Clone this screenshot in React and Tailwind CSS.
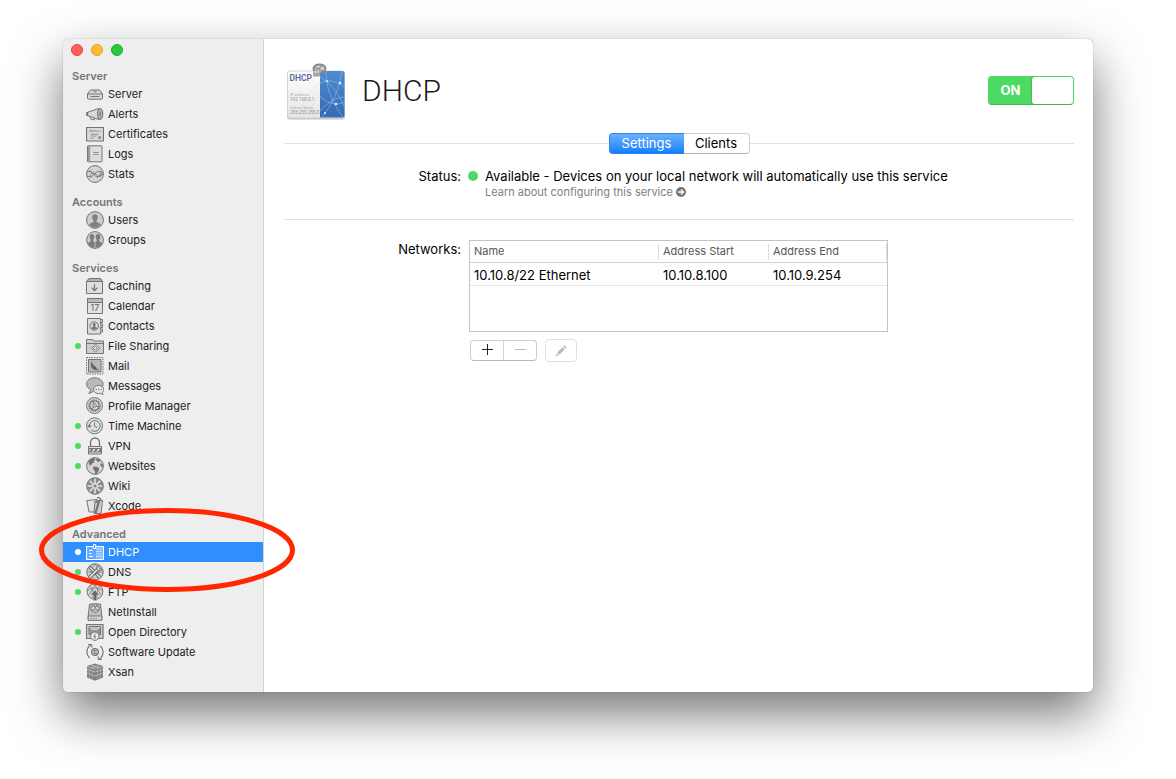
import React, { useState } from "react";

const glyphs = {
  server: (
    <>
      <path d="M1.5 9 4.5 5h9l3 4v4.2a1 1 0 0 1-1 1h-13a1 1 0 0 1-1-1z" fill="#dadada" />
      <path d="M1.5 9h15M4.5 11.5h9M7.5 6.8h3" />
    </>
  ),
  alerts: (
    <>
      <path d="M1 7.5 13 3.5v11L1 10.5z" fill="#d8d8d8" />
      <ellipse cx="14.2" cy="9" rx="2.6" ry="5.6" fill="#b0b0b0" />
      <path d="M14.2 6.8v4.4M4 11.8l1 2.7 3.5.3-.5-2" />
      <path d="M1.2 7.2v3.6" strokeWidth="2" />
    </>
  ),
  certificates: (
    <>
      <path d="M.5 2.500h17v13.500H.5z" fill="#dadada" strokeWidth="1.200" />
      <path d="M3.500 7.200 5 4.800l.8 2.200 1.500-1.500.8 1.300L9.500 5l.7 1.600 1.400-.8 1 .7 2-.6M4.500 9.300h8M4.500 11.300l2-.5 2 .5 2-.5M4.500 13.300h3" strokeWidth=".9" stroke="#8a8a8a" />
      <circle cx="13.600" cy="12.400" r="1.500" fill="#8a8a8a" stroke="none" />
    </>
  ),
  logs: (
    <>
      <rect x="1.500" y=".8" width="14.500" height="16" rx=".8" fill="#dedede" />
      <path d="M2 1.200h2.200v15.400H2z" fill="#9b9b9b" stroke="none" />
      <path d="M7 7.500h6M7 9.500h6" strokeWidth=".9" stroke="#8f8f8f" />
    </>
  ),
  stats: (
    <>
      <circle cx="9" cy="9" r="8.400" fill="#d4d4d4" />
      <path d="M1 7.400c3-2.400 5-.5 7 2.100s4.200 3.200 8.800-.5M1.200 10.800c2.800 2 5 .6 7-1.500s4.500-4.300 8.200-1.800" />
      <path d="M5 12.500c-1.500-2.500.500-5.500 3-4.500s3 4 5.500 3.500 2.500-3 1-4.500M4 5.500l3 3M11 13l4-5" strokeWidth=".8" />
    </>
  ),
  users: (
    <>
      <circle cx="9" cy="9" r="8.400" fill="#cdcdcd" />
      <path d="M9 3.200c-2 0-3 1.500-2.800 3.300.1 1.300.6 2.100 1.200 2.900v1.500c-1.600.9-3.400 1.100-4.300 2.600A7.800 7.800 0 0 0 9 16.600a7.800 7.800 0 0 0 5.900-3.100c-.9-1.500-2.700-1.700-4.300-2.600V9.400c.6-.8 1.100-1.600 1.200-2.900.2-1.800-.8-3.300-2.800-3.300z" fill="#808080" stroke="none" />
    </>
  ),
  groups: (
    <>
      <circle cx="9" cy="9" r="8.400" fill="#cdcdcd" />
      <path d="M5.900 3c-1.700 0-2.500 1.400-2.300 2.900.1 1.200.500 2 1 2.700v1.600c-1 .7-2.200 1-2.800 2.100A8 8 0 0 0 8.600 16.800v-5.600L7.300 10V8.600c.5-.7.9-1.500 1-2.700C8.500 4.400 7.600 3 5.900 3zM12.100 3c1.700 0 2.500 1.400 2.300 2.900-.1 1.200-.5 2-1 2.700v1.600c1 .7 2.200 1 2.800 2.100a8 8 0 0 1-6.800 4.500v-5.600l1.300-1.200V8.600c-.5-.7-.9-1.500-1-2.700-.2-1.500.700-2.900 2.400-2.900z" fill="#7c7c7c" stroke="none" />
    </>
  ),
  caching: (
    <>
      <path d="M.5 4.500 3 1.500h11.400l2.100 3v12H.5z" fill="#dedede" />
      <path d="M.8 4.500 3.200 1.500h11l2.100 3z" fill="#b0b0b0" />
      <path d="M8.500 7v6.500M5.500 10.600l3 3 3-3" strokeWidth="1.200" />
    </>
  ),
  calendar: (
    <>
      <path d="M1.500 1.500h15v15h-15z" fill="#e2e2e2" />
      <path d="M1.500 1.500h15v4h-15z" fill="#b9b9b9" />
      <text x="9" y="14.300" textAnchor="middle" fontSize="9" fill="#666" stroke="none" fontFamily="Inter, sans-serif">17</text>
    </>
  ),
  contacts: (
    <>
      <path d="M1.500 1.500h13v15.500h-13z" fill="#dcdcdc" />
      <path d="M14.500 2.500h2v3h-2m0 1.500h2v3.500h-2m0 1.500h2v3h-2" fill="#c6c6c6" />
      <circle cx="8.200" cy="9" r="4.200" />
      <path d="M8.200 6a1.600 1.600 0 0 0-.9 2.900l-.1.800-2.200 1.300a4 4 0 0 0 6.400 0l-2.200-1.300-.1-.8A1.600 1.600 0 0 0 8.200 6z" fill="#777" stroke="none" />
    </>
  ),
  files: (
    <>
      <path d="M.5 2.500h6.300l1.200 1.500h9.500v12.500H.5z" fill="#cecece" />
      <path d="M.5 6.500h17" />
      <path d="m9.500 7.200 4 4-4 4-4-4z" fill="#eee" />
      <path d="m9.500 9.300 1.900 1.900-1.900 1.900-1.900-1.900z" />
    </>
  ),
  mail: (
    <>
      <path d="M.5.500h16.500v16.500H.5z" strokeDasharray="1.500 1" fill="#e8e8e8" />
      <path d="M2.500 2.500h12.500v12.500H2.500z" fill="#b8b8b8" />
      <path d="M5 4.500v4.500l1.200 2.500 2.600 1.500 4.700.5-3.300-2.300-.2-1.500-1.800-.4L6.500 6.500z" fill="#606060" stroke="none" />
    </>
  ),
  messages: (
    <>
      <path d="M8.500.800C4 .800.600 3.500.600 7c0 2.600 1.800 4.600 4 5.500-.2 1.800-.9 2.800-2 3.800 2.400 0 4.200-1.300 5.200-3 5 .200 9.200-2.300 9.200-6.100 0-3.700-3.800-6.400-8.500-6.400z" fill="#b9b9b9" />
      <path d="M12.600 8.500c-3 0-5.200 1.700-5.200 4s2.200 4 5.200 4l1.800-.2c.8.700 1.700 1 2.800 1-.6-.6-1-1.200-1-2 1-.7 1.600-1.700 1.600-2.800 0-2.300-2.200-4-5.200-4z" fill="#e8e8e8" />
      <path d="M9.700 12.500h1m1.400 0h1m1.400 0h1" strokeWidth="1.300" />
    </>
  ),
  profile: (
    <>
      <circle cx="8.500" cy="8.500" r="8" fill="#d6d6d6" />
      <circle cx="8.500" cy="8.500" r="4.700" strokeWidth="1.200" />
      <circle cx="8.500" cy="8.500" r="5.700" strokeWidth="1.200" strokeDasharray="1.200 1.100" />
      <circle cx="8.500" cy="8.500" r="1.700" />
      <path d="M7.500 4.200v3M10 9l3 1M7.500 10l-2 2.500" />
    </>
  ),
  time: (
    <>
      <circle cx="8.500" cy="8.800" r="8" fill="#dfdfdf" />
      <path d="M3.300 9.500a5.400 5.400 0 1 1 1.800 3.500" />
      <path d="m1.700 8.300 1.700 2 2-1.700" fill="#777" />
      <path d="M8.500 5.500v3.600l2.600 1.500" />
    </>
  ),
  vpn: (
    <>
      <path d="M4.500 9V5.500a4.400 4.400 0 0 1 9 0V9" strokeWidth="1.300" />
      <path d="M2.500 9.500h13v7.500h-13z" fill="#e4e4e4" />
      <path d="M2.500 11.500h13M2.500 15h13" />
      <path d="m3 14.800 2-3h2.500l-2 3zm4.500 0 2-3H12l-2 3zm4.500 0 2-3h1.200l-.1 3z" fill="#777" stroke="none" />
    </>
  ),
  websites: (
    <>
      <circle cx="9" cy="9" r="8.400" fill="#d4d4d4" />
      <path d="M2.200 4.500c1.600-2.200 3.700-3.300 6.300-3.500L9.200 2.500 7.800 4l.6 1.400-2 .6-.6 1.800-2-.4L5 9.200l-1.400-.4zM9.200 2l3.500-.1 1.900 1.900-1.900 1.300L11 4zM7.500 9.500l3.600.3 2.100 2-.6 2.500-2.200 2.700L9.200 17l-.4-3L7 11.800zM14 6.500l2.700.5.2 3-1.700-.3z" fill="#727272" stroke="none" />
    </>
  ),
  wiki: (
    <>
      <circle cx="9" cy="9" r="8.300" fill="#8c8c8c" />
      <path d="M9 9V1.500M9 9l5.300-5.300M9 9h7.500M9 9l5.300 5.300M9 9v7.500M9 9l-5.300 5.300M9 9H1.500M9 9 3.700 3.700" stroke="#e4e4e4" strokeWidth="1.600" />
      <circle cx="9" cy="9" r="2" fill="#808080" stroke="#dedede" />
    </>
  ),
  xcode: (
    <>
      <path d="M.8 3.500 11 2.500l1 12.500H3z" fill="#e4e4e4" />
      <path d="m9 4 7.500-.5-1.500 13H8z" fill="#d2d2d2" />
      <path d="m12.800 3-2 .8-1.500 1.600 1.500.6.700-.8L8.200 17h2.200l3.400-11 .5-3z" fill="#777" stroke="none" />
      <path d="M11 .800c2-.5 3.700.5 4 2.600" strokeWidth="1.400" />
    </>
  ),
  dns: (
    <>
      <circle cx="9" cy="9" r="8.200" fill="#cfcfcf" />
      <path d="M1 9h16M9 1c-5 5-5 11 0 16M9 1c5 5 5 11 0 16" strokeWidth=".6" />
      <path d="M3.500 4 14 14.500" stroke="#666" strokeWidth="3.200" />
      <path d="m4 4.500 4 4M10.500 11l3.500 3.500" stroke="#ececec" strokeWidth="1.400" />
      <path d="M3 15 12 6" stroke="#666" strokeWidth="3.600" />
      <path d="M3.500 14.500 12 6" stroke="#ececec" strokeWidth="1.600" />
      <path d="M12 2.500c-1.500 1.500-1.500 3.500-.3 4.500s3 .8 4.300-.7l-2.200-.3-.6-1.500z" fill="#ececec" stroke="#666" />
    </>
  ),
  ftp: (
    <>
      <circle cx="9" cy="8.500" r="7.900" fill="#d4d4d4" />
      <path d="M1.500 8c3-4 12-4 15 0M4 3c3 3 4 8 2 12M14 3c-3 3-4 8-2 12M3 12l6-10 6 10" strokeWidth=".7" />
      <path d="M9 7 4.300 12h2.900v5.700h3.600V12h2.900z" fill="#686868" stroke="#eee" strokeWidth=".5" />
    </>
  ),
  netinstall: (
    <>
      <path d="M3.500 1h11l1.300 12v4.200H2.200V13z" fill="#c0c0c0" />
      <path d="M2.200 13h13.600v4.200H2.200z" fill="#e0e0e0" />
      <path d="M4.500 15.200h8" strokeDasharray="1.500 1" />
      <circle cx="9" cy="5.200" r="4.200" fill="#dcdcdc" />
      <path d="M5.500 4c2-1 5-1 7 0M5.500 6.500c2 1 5 1 7 0M7.500 1.700c1 2.200 2.500 4.500 4.500 6M11 1.700c-1 2.500-2.500 4.500-4.500 6" strokeWidth=".8" />
    </>
  ),
  directory: (
    <>
      <path d="M.5 1.500h16.500v14H.5z" fill="#cfcfcf" strokeWidth="1.200" />
      <path d="M3 3.500h11.500v8H3z" fill="#989898" />
      <path d="M3.500 4c2 3.500 8.500 3.500 10.500 0" stroke="#d5d5d5" fill="#bdbdbd" />
      <circle cx="8.800" cy="13.200" r="4.200" fill="#ececec" />
      <path d="M9.500 10.700 7.700 13.500h1.800l-.8 2.500" />
    </>
  ),
  update: (
    <>
      <path d="M5 1.800A8.300 8.300 0 0 0 3.600 15M13 16.200A8.300 8.300 0 0 0 14.400 3" strokeWidth="1.200" />
      <path d="M2.200 1.500h3.600v3.300M15.800 16.500h-3.600v-3.300" />
      <circle cx="9" cy="9" r="3.700" fill="#c4c4c4" />
      <path d="M6 8c2-1 4-1 6 0M6 10c2 1 4 1 6 0M8 6c0 2 1 4 3 6" strokeWidth=".8" />
    </>
  ),
  xsan: (
    <>
      <path d="m9 .500 8 2.500v11.500L9 17.700 1 14.500V3z" fill="#808080" stroke="none" />
      <path d="m1 6.500 8 2.500 8-2.500M1 10.200 9 13l8-2.800M1 3.500l8 2.300 8-2.300M5 2.200l8 2.500M13 2.200 5 4.700" stroke="#cfcfcf" strokeWidth=".7" />
      <path d="M6.300 5v11.500M11.700 5v11.500M3.700 4.500v11M14.300 4.500v11" stroke="#bdbdbd" strokeWidth=".5" />
    </>
  ),
  dhcp: (
    <g stroke="#fff">
      <path d="M.5 3.500h17v13H.5z" fill="#5ea9ff" strokeWidth="1.200" />
      <path d="M10 4h7v12h-7z" fill="#7dbaff" stroke="none" />
      <path d="M10.500 6h6M10.500 8.500h6M10.500 11h6M10.500 13.500h6" strokeDasharray="1 1" />
      <path d="M3 7.500h3.500M3 10.500h2.500M3 13.500h4" strokeWidth="1" />
      <path d="M7.400 1.500h2.200v4H7.400z" fill="#2f8fff" />
    </g>
  ),
};

function Glyph({ name }) {
  return (
    <svg viewBox="0 0 18 18" className="size-[18px] shrink-0" fill="none" stroke="#747474" aria-hidden="true">
      {glyphs[name]}
    </svg>
  );
}

const sections = [
  {
    title: "Server",
    items: [
      ["Server", "server"],
      ["Alerts", "alerts"],
      ["Certificates", "certificates"],
      ["Logs", "logs"],
      ["Stats", "stats"],
    ],
  },
  {
    title: "Accounts",
    items: [
      ["Users", "users"],
      ["Groups", "groups"],
    ],
  },
  {
    title: "Services",
    items: [
      ["Caching", "caching"],
      ["Calendar", "calendar"],
      ["Contacts", "contacts"],
      ["File Sharing", "files", true],
      ["Mail", "mail"],
      ["Messages", "messages"],
      ["Profile Manager", "profile"],
      ["Time Machine", "time", true],
      ["VPN", "vpn", true],
      ["Websites", "websites", true],
      ["Wiki", "wiki"],
      ["Xcode", "xcode"],
    ],
  },
  {
    title: "Advanced",
    marked: true,
    items: [
      ["DHCP", "dhcp", true],
      ["DNS", "dns", true],
      ["FTP", "ftp", true],
      ["NetInstall", "netinstall"],
      ["Open Directory", "directory", true],
      ["Software Update", "update"],
      ["Xsan", "xsan"],
    ],
  },
];

function SidebarItem({ label, icon, running, selected }) {
  const dot = selected ? "bg-white" : running ? "bg-[#4cd964]" : "";
  return (
    <li>
      <a
        href="#"
        aria-current={selected ? "page" : undefined}
        className={`flex h-5 items-center pl-3 ${selected ? "bg-[#2f8fff] text-white" : "text-[#222222]"}`}
      >
        <span className={`mr-[5px] size-1.5 shrink-0 rounded-full ${dot}`} />
        <Glyph name={icon} />
        <span className="ml-1 whitespace-nowrap">{label}</span>
      </a>
    </li>
  );
}

function Sidebar() {
  return (
    <aside className="w-[201px] shrink-0 rounded-l-[5px] border-r border-[#d2d2d2] bg-[#eeeeee] pb-2.5">
      <div className="flex h-[29px] items-start gap-2 pt-[5px] pl-2">
        <button aria-label="Close" className="size-3 rounded-full border border-[#e2463f] bg-[#ff5f57]" />
        <button aria-label="Minimize" className="size-3 rounded-full border border-[#dfa023] bg-[#ffbd2e]" />
        <button aria-label="Zoom" className="size-3 rounded-full border border-[#1dad2b] bg-[#28c940]" />
      </div>
      <nav className="flex flex-col gap-2.5 text-[11px]">
        {sections.map((s) => (
          <section key={s.title} className="relative">
            <h2 className="pl-[9px] text-[11px] leading-4 font-semibold text-[#757575]">{s.title}</h2>
            <ul>
              {s.items.map(([label, icon, running]) => (
                <SidebarItem key={label} label={label} icon={icon} running={running} selected={label === "DHCP"} />
              ))}
            </ul>
            {s.marked && (
              <svg
                viewBox="0 0 256 86"
                className="pointer-events-none absolute -top-[19px] -left-6 h-[86px] w-[256px]"
                fill="none"
                aria-hidden="true"
              >
                <ellipse cx="128" cy="43" rx="125.500" ry="39.500" stroke="#ff2600" strokeWidth="5" />
              </svg>
            )}
          </section>
        ))}
      </nav>
    </aside>
  );
}

function DhcpBadge() {
  return (
    <svg viewBox="0 0 60 58" className="h-[58px] w-[60px]" aria-hidden="true">
      <defs>
        <linearGradient id="card" x1="0" y1="0" x2="0" y2="1">
          <stop offset="0" stopColor="#fdfdfd" />
          <stop offset="1" stopColor="#e6e6e6" />
        </linearGradient>
        <linearGradient id="blue" x1="0" y1="0" x2="0" y2="1">
          <stop offset="0" stopColor="#4f8bd0" />
          <stop offset="1" stopColor="#3569b5" />
        </linearGradient>
        <clipPath id="half">
          <path d="M34 8h22.500a2 2 0 0 1 2 2v42.500a2 2 0 0 1-2 2H34z" />
        </clipPath>
      </defs>
      <rect x="1" y="9" width="58" height="47.500" rx="3" fill="#9b9b9b" opacity=".6" />
      <rect x="1.500" y="8" width="57" height="47" rx="2.500" fill="url(#card)" stroke="#cfcfcf" strokeWidth=".8" />
      <g clipPath="url(#half)">
        <path d="M34 8h25v47H34z" fill="url(#blue)" />
        <g fill="none" stroke="#a9cdf2" strokeWidth=".8" opacity=".6">
          <path d="M34 33c8 8 16 10 25 6M34 20c10-4 18-2 25 5M34 48c8-9 17-14 25-14M40 8c0 17 6 32 17 46M56 8c-3 18-9 33-20 46M34 14c12 7 20 18 25 32" />
        </g>
        <g fill="#d8ecff">
          <circle cx="54" cy="20" r="1.300" />
          <circle cx="41" cy="18" r="1" />
          <circle cx="50" cy="41" r="1.300" />
          <circle cx="39" cy="50" r="1" />
        </g>
      </g>
      <path d="M18 54c2-12 8-22 16-27M24 54c0-10 4-18 10-23M12 55c5-16 12-26 22-36" stroke="#e2e2e2" strokeWidth=".7" fill="none" />
      <ellipse cx="33.500" cy="5.500" rx="6" ry="4" fill="#d5d5d5" stroke="#888" strokeWidth="2" />
      <path d="m28 4 9 4M29 8l7-5" stroke="#8f8f8f" strokeWidth="1.200" />
      <rect x="27" y="7.500" width="7" height="6" rx="1" fill="#a5a5a5" />
      <path d="M28 9h5" stroke="#eee" />
      <g fontFamily="Roboto, sans-serif">
        <text x="3.500" y="17.800" fontSize="8.500" fontWeight="600" fill="#5b6b92">DHCP</text>
        <text x="4" y="32.500" fontSize="4" fill="#b0b0b0">IP address</text>
        <text x="4" y="37.500" fontSize="4.600" fill="#909090">192.168.0.1</text>
        <text x="4" y="45.500" fontSize="4" fill="#b0b0b0">Subnet Mask</text>
        <text x="4" y="50.500" fontSize="4.600" fill="#909090">255.255.255.0</text>
      </g>
    </svg>
  );
}

function ServiceSwitch() {
  const [on, setOn] = useState(true);
  return (
    <button
      role="switch"
      aria-checked={on}
      aria-label="DHCP service"
      onClick={() => setOn(!on)}
      className={`flex h-[29px] w-[86px] items-stretch rounded-[4px] border ${on ? "border-[#4cd964] border-b-[#3fb553] bg-[#4cd964]" : "flex-row-reverse border-[#bbb] bg-[#bbb]"}`}
    >
      <span className="flex flex-1 items-center justify-center text-[13px] font-bold text-white">{on ? "ON" : "OFF"}</span>
      <span className="w-[41px] rounded-[3px] bg-white shadow-[-1px_0_1px_rgba(0,0,0,0.15)]" />
    </button>
  );
}

function Tabs() {
  const [tab, setTab] = useState("Settings");
  const active = "border-[#2f86f0] bg-linear-to-b from-[#69b1fa] to-[#0d7eff] text-white";
  const idle = "border-[#cfcfcf] border-b-[#b5b5b5] bg-white text-black";
  return (
    <div className="flex items-center">
      <span className="h-px flex-1 bg-[#e2e2e2]" />
      <div role="tablist" className="flex h-[21px] text-[13px] leading-[19px]">
        <button
          role="tab"
          aria-selected={tab === "Settings"}
          onClick={() => setTab("Settings")}
          className={`w-[75px] rounded-l-[4px] border border-r-0 ${tab === "Settings" ? active : idle}`}
        >
          Settings
        </button>
        <button
          role="tab"
          aria-selected={tab === "Clients"}
          onClick={() => setTab("Clients")}
          className={`w-[66px] rounded-r-[4px] border border-l-0 ${tab === "Clients" ? active : idle}`}
        >
          Clients
        </button>
      </div>
      <span className="h-px flex-1 bg-[#e2e2e2]" />
    </div>
  );
}

const networks = [{ name: "10.10.8/22 Ethernet", start: "10.10.8.100", end: "10.10.9.254" }];

function HeadCell({ children }) {
  return (
    <th scope="col" className="h-[22px] border-b border-[#d0d0d0] p-0 text-left text-[11px] leading-[14px] font-normal text-[#555]">
      <div className="border-r border-[#dcdcdc] pb-0.5 pl-1">{children}</div>
    </th>
  );
}

function Cell({ children }) {
  return <td className="h-[23px] border-b border-[#e6e6e6] pt-0.5 pr-0 pb-0 pl-1">{children}</td>;
}

function NetworksTable() {
  return (
    <div className="h-[92px] w-[419px] border border-[#c4c4c4] bg-white">
      <table aria-labelledby="networks-label" className="w-full table-fixed border-separate border-spacing-0">
        <colgroup>
          <col className="w-[189px]" />
          <col className="w-[110px]" />
          <col />
        </colgroup>
        <thead>
          <tr>
            <HeadCell>Name</HeadCell>
            <HeadCell>Address Start</HeadCell>
            <HeadCell>Address End</HeadCell>
          </tr>
        </thead>
        <tbody className="text-[13px] leading-4 text-black">
          {networks.map((n) => (
            <tr key={n.name}>
              <Cell>{n.name}</Cell>
              <Cell>{n.start}</Cell>
              <Cell>{n.end}</Cell>
            </tr>
          ))}
        </tbody>
      </table>
    </div>
  );
}

export default function App() {
  return (
    <div className="flex min-h-screen bg-white pt-[39px] pr-[83px] pb-[87px] pl-[63px] font-['Inter',sans-serif] text-black">
      <div className="flex flex-1 rounded-[5px] bg-white shadow-[0_0_1px_rgba(0,0,0,0.5),0_22px_50px_rgba(0,0,0,0.54)]">
        <div className="relative z-10 flex">
          <Sidebar />
        </div>
        <main className="flex min-w-0 flex-1 flex-col pt-6 pr-[19px] pl-5">
          <header className="flex items-start pl-0.5">
            <DhcpBadge />
            <h1 className="ml-4 flex-1 pt-2 font-['Roboto',sans-serif] text-[30px] leading-[40px] font-light text-[#1a1a1a]">DHCP</h1>
            <div className="pt-[13px]">
              <ServiceSwitch />
            </div>
          </header>

          <div className="mt-3">
            <Tabs />
          </div>

          <div className="mt-3.5 grid grid-cols-[177px_1fr] gap-x-[7px] border-b border-[#e2e2e2] pb-[19px] text-[13px] leading-4">
            <span className="text-right">Status:</span>
            <div className="flex items-start">
              <span className="mt-[3px] mr-[7px] size-2.5 shrink-0 rounded-full bg-[#4cd964]" />
              <div>
                <p>Available - Devices on your local network will automatically use this service</p>
                <a href="#" className="flex items-center gap-[3px] text-[11px] leading-4 text-[#808080]">
                  Learn about configuring this service
                  <svg viewBox="0 0 10 10" className="size-2.5" aria-hidden="true">
                    <circle cx="5" cy="5" r="5" fill="#747474" />
                    <path d="M2 5h5M5 2.500 7.500 5 5 7.500" stroke="#fff" strokeWidth="1.400" fill="none" />
                  </svg>
                </a>
              </div>
            </div>
          </div>

          <div className="mt-5 grid grid-cols-[177px_1fr] gap-x-2">
            <span id="networks-label" className="pt-px text-right text-[13px] leading-4">
              Networks:
            </span>
            <div>
              <NetworksTable />
              <div className="mt-[7px] ml-px flex items-center gap-2">
                <div className="flex h-[21px] rounded-[4px] border border-[#cdcdcd] border-b-[#b8b8b8]">
                  <button aria-label="Add network" className="flex w-[33px] items-center justify-center border-r border-[#d8d8d8] pb-0.5">
                    <svg viewBox="0 0 11 11" className="size-[11px]" stroke="#222" aria-hidden="true">
                      <path d="M0 5.500h11M5.500 0v11" />
                    </svg>
                  </button>
                  <button aria-label="Remove network" disabled className="flex w-8 items-center justify-center pb-0.5">
                    <svg viewBox="0 0 11 11" className="size-[11px]" stroke="#bdbdbd" aria-hidden="true">
                      <path d="M0 5.500h11" />
                    </svg>
                  </button>
                </div>
                <button
                  aria-label="Edit network"
                  disabled
                  className="flex h-[23px] w-8 items-center justify-center rounded-[4px] border border-[#e0e0e0]"
                >
                  <svg viewBox="0 0 12 12" className="size-3" fill="#b9b9b9" aria-hidden="true">
                    <path d="m.7 11.300.8-3 2.200 2.200zM2.200 7.600 7.500 2.300l2.200 2.200-5.300 5.300zM8.200 1.600l.7-.7c.4-.4.900-.4 1.300 0l.9.900c.4.400.4.900 0 1.300l-.7.700z" />
                  </svg>
                </button>
              </div>
            </div>
          </div>
        </main>
      </div>
    </div>
  );
}
